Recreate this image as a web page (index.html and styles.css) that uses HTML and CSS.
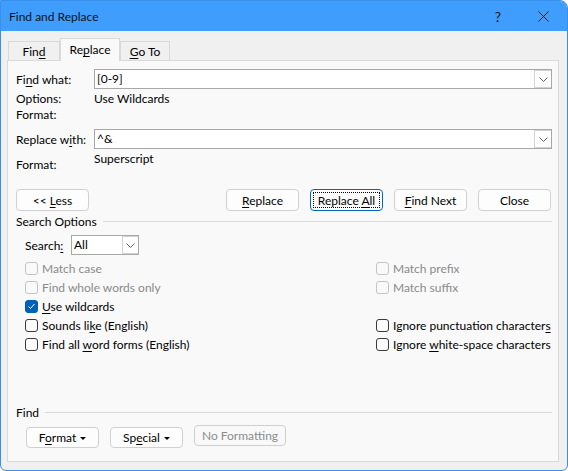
FILE: index.html
```html
<!DOCTYPE html>
<html lang="en">
  <head>
    <meta charset="UTF-8" />
    <title>Find and Replace</title>
    <link rel="stylesheet" href="styles.css">
  </head>
  <body>
    <div class="window">
      <div class="titlebar">
        <span class="title">Find and Replace</span>
        <span class="title-btn help">?</span>
        <span class="title-btn close">
          <svg width="11" height="11" viewBox="0 0 11 11">
            <path d="M0.5 0.5 L10.5 10.5 M10.5 0.5 L0.5 10.5" stroke="#1a1a1a" stroke-width="1" fill="none" />
          </svg>
        </span>
      </div>

      <div class="tabs">
        <div class="tab tab-find">Fin<u>d</u></div>
        <div class="tab tab-replace active">Re<u>p</u>lace</div>
        <div class="tab tab-goto"><u>G</u>o To</div>
      </div>

      <div class="panel">
        <div class="field-row">
          <span class="label">Fi<u>n</u>d what:</span>
          <div class="combo">
            <span class="combo-text">[0-9]</span>
            <span class="combo-btn">
              <svg width="9" height="5" viewBox="0 0 9 5"><path d="M0.5 0.5 L4.5 4.5 L8.5 0.5" stroke="#606060" fill="none" /></svg>
            </span>
          </div>
        </div>
        <div class="info-row">
          <span class="label">Options:</span>
          <span class="value">Use Wildcards</span>
        </div>
        <div class="info-row">
          <span class="label">Format:</span>
        </div>

        <div class="field-row replace-row">
          <span class="label">Replace w<u>i</u>th:</span>
          <div class="combo">
            <span class="combo-text">^&amp;</span>
            <span class="combo-btn">
              <svg width="9" height="5" viewBox="0 0 9 5"><path d="M0.5 0.5 L4.5 4.5 L8.5 0.5" stroke="#606060" fill="none" /></svg>
            </span>
          </div>
        </div>
        <div class="format-row">
          <span class="label">Format:</span>
          <span class="value">Superscript</span>
        </div>

        <div class="button-row">
          <button class="btn">&lt;&lt; <u>L</u>ess</button>
          <div class="spacer"></div>
          <button class="btn"><u>R</u>eplace</button>
          <button class="btn default">Replace <u>A</u>ll</button>
          <button class="btn"><u>F</u>ind Next</button>
          <button class="btn">Close</button>
        </div>

        <div class="group-head">Search Options</div>

        <div class="search-row">
          <span class="search-label">Search<u>:</u></span>
          <div class="select">
            <span class="combo-text">All</span>
            <span class="combo-btn">
              <svg width="9" height="5" viewBox="0 0 9 5"><path d="M0.5 0.5 L4.5 4.5 L8.5 0.5" stroke="#606060" fill="none" /></svg>
            </span>
          </div>
        </div>

        <div class="options">
          <div class="option disabled"><span class="cb"></span><span>Match case</span></div>
          <div class="option disabled"><span class="cb"></span><span>Match prefix</span></div>
          <div class="option disabled"><span class="cb"></span><span>Find whole words only</span></div>
          <div class="option disabled"><span class="cb"></span><span>Match suffix</span></div>
          <div class="option">
            <span class="cb checked">
              <svg width="11" height="11" viewBox="0 0 11 11"><path d="M2.5 5.5 L4.5 7.5 L8.5 3" stroke="#fff" stroke-width="1" fill="none" /></svg>
            </span>
            <span><u>U</u>se wildcards</span>
          </div>
          <div class="option"></div>
          <div class="option"><span class="cb"></span><span>Sounds li<u>k</u>e (English)</span></div>
          <div class="option"><span class="cb"></span><span>Ignore punctuation character<u>s</u></span></div>
          <div class="option"><span class="cb"></span><span>Find all <u>w</u>ord forms (English)</span></div>
          <div class="option"><span class="cb"></span><span>Ignore <u>w</u>hite-space characters</span></div>
        </div>

        <div class="group-head find-head">Find</div>

        <div class="bottom-row">
          <button class="btn">F<u>o</u>rmat <span class="caret"></span></button>
          <button class="btn">Sp<u>e</u>cial <span class="caret"></span></button>
          <button class="btn wide disabled-btn">No Formatting</button>
        </div>
      </div>
    </div>
  </body>
</html>
```

FILE: styles.css
```css
* {
  margin: 0;
  padding: 0;
  box-sizing: border-box;
}

body {
  font-family: "Lato", "Liberation Sans", sans-serif;
  font-size: 12px;
  color: #000;
  background: #fff;
}

u {
  text-underline-offset: 2px;
}

.window {
  width: 568px;
  height: 471px;
  border: 1px solid #3a8fea;
  border-radius: 0 8px 6px 6px;
  background: #f0f0f0;
  display: flex;
  flex-direction: column;
  overflow: hidden;
}

/* title bar */
.titlebar {
  height: 30px;
  background: #3f9dfd;
  display: flex;
  align-items: center;
  padding-left: 8px;
}

.title {
  flex: 1;
  color: #111;
}

.title-btn {
  display: flex;
  align-items: center;
  justify-content: center;
  height: 30px;
}

.help {
  width: 44px;
  font-size: 14px;
  color: #111;
}

.close {
  width: 46px;
  margin-right: 1px;
}

/* tabs */
.tabs {
  height: 29px;
  display: flex;
  align-items: flex-end;
  padding-left: 7px;
  position: relative;
  z-index: 1;
}

.tab {
  height: 19px;
  border: 1px solid #d9d9d9;
  border-bottom: none;
  background: #f0f0f0;
  display: flex;
  align-items: center;
  justify-content: center;
}

.tab-find {
  width: 52px;
}

.tab-replace {
  width: 60px;
}

.tab-goto {
  width: 50px;
}

.tab.active {
  height: 23px;
  margin-bottom: -1px;
  background: #f9f9f9;
  align-items: flex-start;
  padding-top: 3px;
}

/* panel */
.panel {
  flex: 1;
  margin: 0 8px 8px 6px;
  border: 1px solid #dadada;
  background: #f9f9f9;
  padding: 8px 6px 0 8px;
  display: flex;
  flex-direction: column;
}

.field-row {
  display: flex;
  align-items: center;
  height: 20px;
}

.label {
  width: 78px;
  flex-shrink: 0;
}

.combo,
.select {
  flex: 1;
  height: 20px;
  border: 1px solid #a8a8a8;
  background: #fff;
  display: flex;
  align-items: stretch;
}

.combo-text {
  flex: 1;
  padding-left: 2px;
  line-height: 18px;
}

.combo-btn {
  width: 17px;
  border: 1px solid #d2d2d2;
  border-right: none;
  display: flex;
  align-items: center;
  justify-content: center;
  background: #fff;
}

.info-row {
  display: flex;
  height: 16px;
  line-height: 16px;
}

.field-row + .info-row {
  margin-top: 2px;
}

.replace-row {
  margin-top: 6px;
}

.format-row {
  display: flex;
  height: 22px;
  margin-top: 2px;
  line-height: 16px;
}

.format-row .label {
  align-self: flex-end;
}

.format-row .value {
  align-self: flex-start;
}

/* buttons */
.button-row {
  display: flex;
  gap: 11px;
  margin-top: 16px;
  padding-right: 1px;
}

.spacer {
  flex: 1;
}

.btn {
  width: 73px;
  height: 22px;
  border: 1px solid #d0d0d0;
  border-radius: 4px;
  background: #fdfdfd;
  font-family: inherit;
  font-size: 12px;
  color: #000;
  position: relative;
}

.btn.default {
  border-color: #0067c0;
}

.btn.default::after {
  content: "";
  position: absolute;
  inset: 2px;
  border: 1px dotted #000;
}

.caret {
  display: inline-block;
  width: 0;
  height: 0;
  border-left: 3px solid transparent;
  border-right: 3px solid transparent;
  border-top: 3px solid #000;
  vertical-align: middle;
  margin-left: 1px;
}

/* search options */
.group-head {
  display: flex;
  align-items: center;
  gap: 6px;
  height: 16px;
  margin-top: 2px;
}

.group-head::after {
  content: "";
  flex: 1;
  height: 1px;
  background: #dcdcdc;
}

.search-row {
  display: flex;
  align-items: center;
  margin-top: 6px;
  padding-left: 9px;
}

.search-label {
  width: 46px;
}

.select {
  flex: 0 0 68px;
}

.select .combo-btn {
  width: 16px;
}

.options {
  display: grid;
  grid-template-columns: 351px auto;
  grid-auto-rows: 19px;
  margin-top: 4px;
  padding-left: 9px;
}

.option {
  display: flex;
  align-items: center;
  gap: 4px;
}

.cb {
  width: 13px;
  height: 13px;
  flex-shrink: 0;
  border: 1px solid #3a3a3a;
  border-radius: 3px;
  background: #fbfbfb;
  display: flex;
  align-items: center;
  justify-content: center;
}

.cb.checked {
  background: #005fb8;
  border-color: #005fb8;
}

.option.disabled {
  color: #8a8a8a;
}

.option.disabled .cb {
  border-color: #c4c4c4;
  background: #f9f9f9;
}

.find-head {
  margin-top: 50px;
}

.bottom-row {
  display: flex;
  align-items: flex-start;
  gap: 11px;
  margin-top: 7px;
  padding-left: 10px;
}

.bottom-row .btn {
  height: 21px;
}

.btn.wide {
  width: 92px;
}

.btn.disabled-btn {
  color: #8c8c8c;
  border-color: #cfcfcf;
  background: #f9f9f9;
  margin-top: -2px;
}
```
